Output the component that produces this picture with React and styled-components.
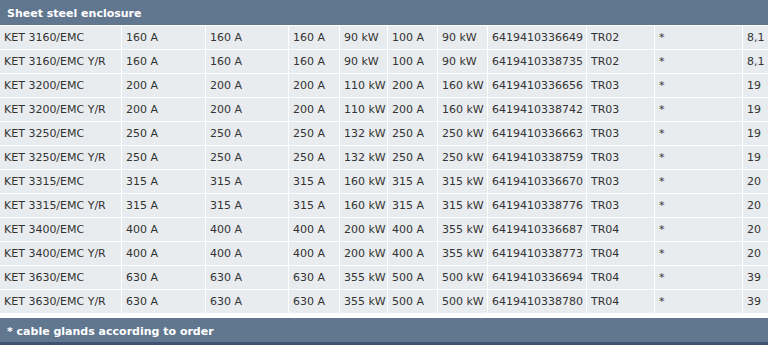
import styled, { createGlobalStyle } from "styled-components";

const GlobalStyle = createGlobalStyle`
  body {
    margin: 0;
    background: #fff;
    font-family: "DejaVu Sans", Verdana, sans-serif;
  }
`;

// 전체 박스
const Wrapper = styled.div`
  width: 768px;
  display: flex;
  flex-direction: column;
`;

// 위, 아래 파란 바
const Bar = styled.div`
  box-sizing: border-box;
  height: ${(p) => (p.$footer ? "27px" : "25px")};
  background: #61778f;
  color: #fff;
  font-weight: bold;
  font-size: 11px;
  display: flex;
  align-items: center;
  padding: 2px 0 0 7px;
  border-bottom: ${(p) => (p.$footer ? "3px solid #3e5372" : "none")};
  margin-top: ${(p) => (p.$footer ? "5px" : "0")};
`;

// 표 본체
const Grid = styled.div`
  display: grid;
  grid-template-columns: 121px 83px 82px 50px 47px 49px 49px 98px 67px 87px 25px;
  grid-auto-rows: 23px;
  gap: 1px;
  margin-top: 1px;
  background: #fff;
`;

const Cell = styled.div`
  background: #e9ecef;
  color: #333;
  font-size: 11px;
  display: flex;
  align-items: center;
  padding-left: 4px;
  white-space: nowrap;
  overflow: hidden;
`;

const rows = [
  ["KET 3160/EMC", "160 A", "160 A", "160 A", "90 kW", "100 A", "90 kW", "6419410336649", "TR02", "*", "8,1"],
  ["KET 3160/EMC Y/R", "160 A", "160 A", "160 A", "90 kW", "100 A", "90 kW", "6419410338735", "TR02", "*", "8,1"],
  ["KET 3200/EMC", "200 A", "200 A", "200 A", "110 kW", "200 A", "160 kW", "6419410336656", "TR03", "*", "19"],
  ["KET 3200/EMC Y/R", "200 A", "200 A", "200 A", "110 kW", "200 A", "160 kW", "6419410338742", "TR03", "*", "19"],
  ["KET 3250/EMC", "250 A", "250 A", "250 A", "132 kW", "250 A", "250 kW", "6419410336663", "TR03", "*", "19"],
  ["KET 3250/EMC Y/R", "250 A", "250 A", "250 A", "132 kW", "250 A", "250 kW", "6419410338759", "TR03", "*", "19"],
  ["KET 3315/EMC", "315 A", "315 A", "315 A", "160 kW", "315 A", "315 kW", "6419410336670", "TR03", "*", "20"],
  ["KET 3315/EMC Y/R", "315 A", "315 A", "315 A", "160 kW", "315 A", "315 kW", "6419410338776", "TR03", "*", "20"],
  ["KET 3400/EMC", "400 A", "400 A", "400 A", "200 kW", "400 A", "355 kW", "6419410336687", "TR04", "*", "20"],
  ["KET 3400/EMC Y/R", "400 A", "400 A", "400 A", "200 kW", "400 A", "355 kW", "6419410338773", "TR04", "*", "20"],
  ["KET 3630/EMC", "630 A", "630 A", "630 A", "355 kW", "500 A", "500 kW", "6419410336694", "TR04", "*", "39"],
  ["KET 3630/EMC Y/R", "630 A", "630 A", "630 A", "355 kW", "500 A", "500 kW", "6419410338780", "TR04", "*", "39"],
];

export default function App() {
  return (
    <>
      <GlobalStyle />
      <Wrapper>
        <Bar>Sheet steel enclosure</Bar>
        <Grid>
          {rows.map((row, i) =>
            row.map((text, j) => <Cell key={i + "-" + j}>{text}</Cell>)
          )}
        </Grid>
        <Bar $footer>* cable glands according to order</Bar>
      </Wrapper>
    </>
  );
}
